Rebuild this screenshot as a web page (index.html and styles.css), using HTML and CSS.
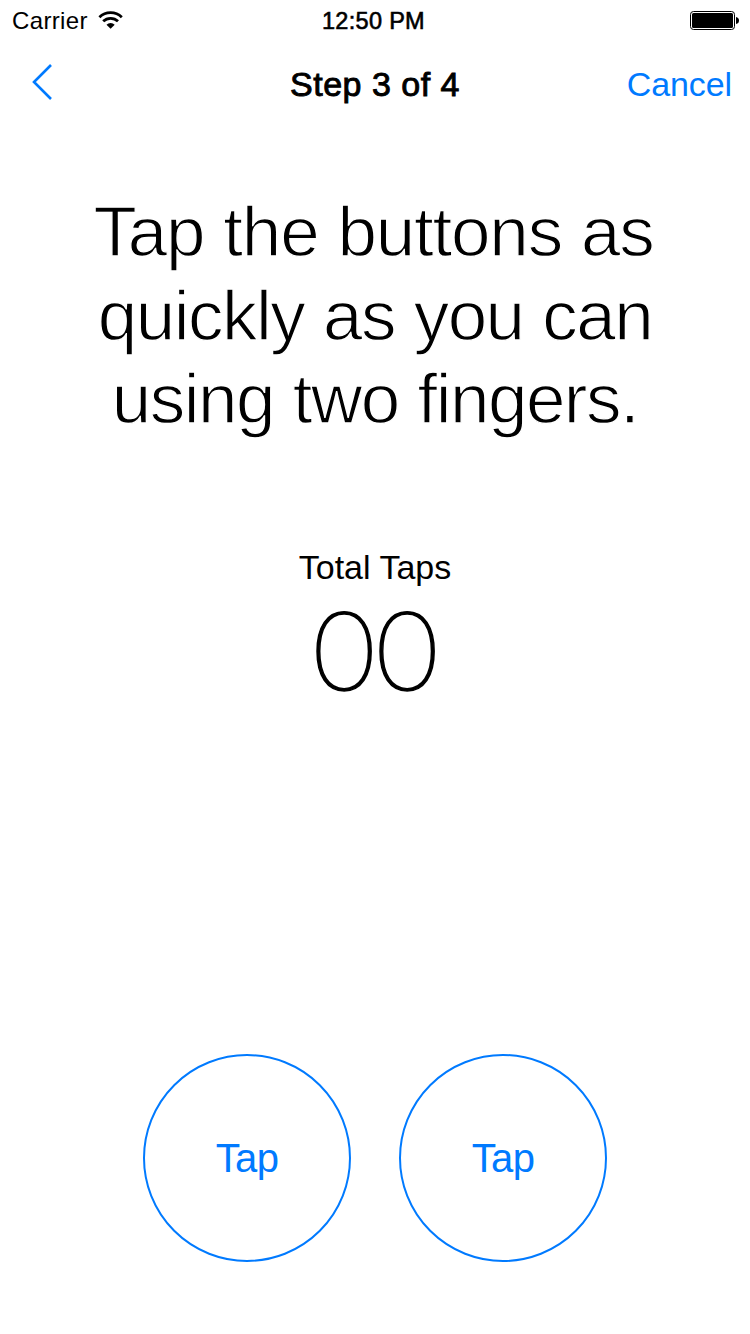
FILE: index.html
```html
<!DOCTYPE html>
<html lang="en">
<head>
<meta charset="utf-8">
<title>Step 3 of 4</title>
<link rel="stylesheet" href="styles.css">
</head>
<body>
<div class="screen">
  <div class="status-bar">
    <div class="status-left">
      <span class="carrier">Carrier</span>
      <svg class="wifi" width="26" height="20" viewBox="0 0 26 20">
        <g fill="none" stroke="#000" stroke-width="2.8">
          <path d="M1.4 7.2A16.2 16.2 0 0 1 23.8 7.2"/>
          <path d="M5.2 11.3A10.6 10.6 0 0 1 20 11.3"/>
        </g>
        <path d="M8.5 14.7A5.7 5.7 0 0 1 16.7 14.7L12.6 18.8Z"/>
      </svg>
    </div>
    <span class="clock">12:50 PM</span>
    <div class="status-right">
      <svg width="49" height="19" viewBox="0 0 49 19">
        <rect x=".5" y=".5" width="44" height="18" rx="3" fill="#fff" stroke="#000"/>
        <rect x="2" y="2" width="41" height="15" rx="1.5"/>
        <path d="M46 6Q49 6.5 49 9.5T46 13Z"/>
      </svg>
    </div>
  </div>
  <div class="nav-bar">
    <div class="nav-left">
      <svg width="22" height="38" viewBox="0 0 22 38"><path d="M20 2L3 19L20 36" fill="none" stroke="#007aff" stroke-width="2.6"/></svg>
    </div>
    <span class="nav-title">Step 3 of 4</span>
    <a class="nav-cancel">Cancel</a>
  </div>
  <div class="prompt">
    <span class="prompt-lead">Tap the buttons as</span>
    <span>quickly as you can</span>
    <span>using two fingers.</span>
  </div>
  <div class="counter">
    <span class="counter-label">Total Taps</span>
    <span class="counter-value">00</span>
  </div>
  <div class="buttons">
    <button class="tap-button"><span>Tap</span></button>
    <button class="tap-button"><span>Tap</span></button>
  </div>
</div>
</body>
</html>
```
FILE: styles.css
```css
* { box-sizing: border-box; }
body { margin: 0; background: #fff; }
.screen {
  display: flex;
  flex-direction: column;
  width: 750px;
  height: 1334px;
  color: #000;
  font-family: "Liberation Sans", Arial, sans-serif;
  white-space: nowrap;
}
.status-bar {
  display: grid;
  grid-template-columns: 1fr auto 1fr;
  align-items: center;
  height: 40px;
  padding: 0 11px;
}
.status-left { display: flex; align-items: center; gap: 10px; padding-left: 1px; }
.carrier { padding-top: 2px; font-size: 24px; letter-spacing: 0.35px; line-height: 38px; }
.clock {
  padding-top: 2px;
  margin-right: 3px;
  font-size: 23.5px;
  letter-spacing: 0.3px;
  line-height: 38px;
  -webkit-text-stroke: 0.6px #000;
}
.status-right { display: flex; justify-content: flex-end; }
.nav-bar {
  display: grid;
  grid-template-columns: 1fr auto 1fr;
  align-items: center;
  height: 88px;
  padding: 0 18px;
}
.nav-left { display: flex; margin-bottom: 4px; padding-left: 13px; }
.nav-title { font-size: 34px; letter-spacing: 0.5px; -webkit-text-stroke: 0.9px #000; }
.nav-cancel { font-size: 34px; letter-spacing: -0.1px; color: #007aff; justify-self: end; }
.prompt {
  display: flex;
  flex-direction: column;
  align-items: center;
  margin-top: 62px;
  font-size: 71px;
  letter-spacing: -1.5px;
  word-spacing: 0.5px;
  line-height: 83.5px;
  -webkit-text-stroke: 1.3px #fff;
}
.prompt-lead { margin-right: 3px; letter-spacing: -1.2px; }
.counter {
  display: flex;
  flex-direction: column;
  align-items: center;
  margin-top: 106.5px;
}
.counter-label { font-size: 34px; line-height: 40px; }
.counter-value {
  margin-right: 8px;
  font-family: Inter, "Liberation Sans", sans-serif;
  font-size: 106.5px;
  font-weight: 100;
  letter-spacing: -7.6px;
  line-height: 130px;
  transform: scaleX(1.14);
  -webkit-text-stroke: 1.3px #000;
}
.buttons {
  display: flex;
  justify-content: center;
  gap: 48px;
  margin-top: auto;
  margin-bottom: 72px;
}
.tap-button {
  width: 208px;
  height: 208px;
  padding: 0;
  border: 2px solid #007aff;
  border-radius: 50%;
  background: none;
  color: #007aff;
  font: 40px/48px "Liberation Sans", Arial, sans-serif;
  letter-spacing: -0.6px;
}
```
